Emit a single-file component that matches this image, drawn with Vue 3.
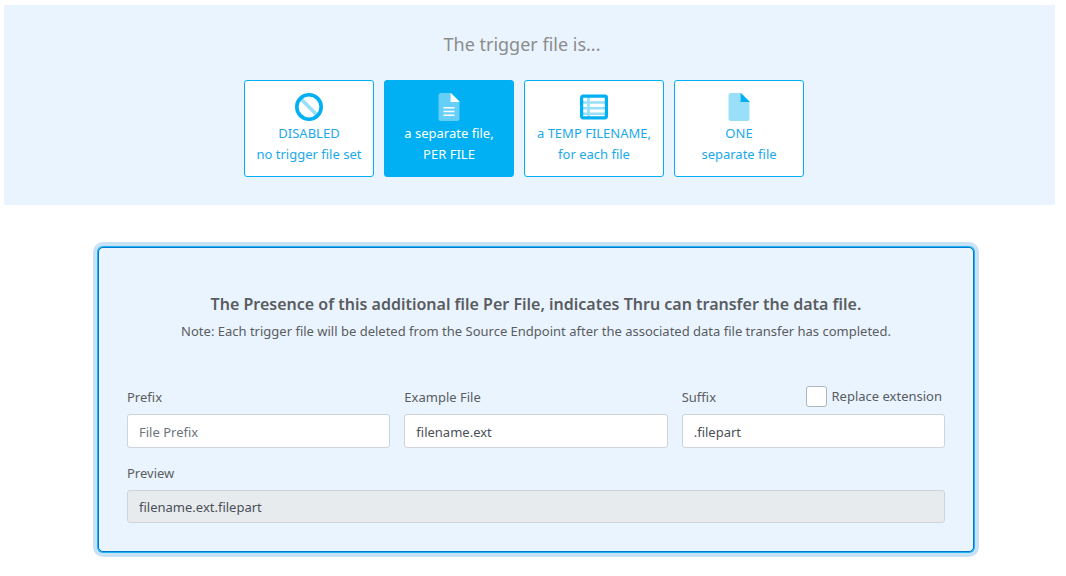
<script setup>
import { ref, computed } from 'vue'

const options = [
  { id: 'disabled', icon: 'ban', lines: ['DISABLED', 'no trigger file set'] },
  { id: 'per-file', icon: 'file-lines', lines: ['a separate file,', 'PER FILE'] },
  { id: 'temp', icon: 'table', lines: ['a TEMP FILENAME,', 'for each file'], wide: true },
  { id: 'one', icon: 'file', lines: ['ONE', 'separate file'] },
]

const selected = ref('per-file')
const prefix = ref('')
const example = ref('filename.ext')
const suffix = ref('.filepart')
const replaceExtension = ref(false)

const preview = computed(() => {
  const base = replaceExtension.value ? example.value.replace(/\.[^.]*$/, '') : example.value
  return prefix.value + base + suffix.value
})
</script>

<template>
  <main class="page">
    <section class="chooser">
      <h1 class="chooser-title">The trigger file is...</h1>
      <div class="options">
        <button
          v-for="o in options"
          :key="o.id"
          type="button"
          class="option"
          :class="{ active: selected === o.id, wide: o.wide }"
          :aria-pressed="selected === o.id"
          @click="selected = o.id"
        >
          <svg class="icon" viewBox="0 0 28 28" aria-hidden="true">
            <template v-if="o.icon === 'ban'">
              <path d="M6 6L22 22" stroke="currentColor" stroke-width="3.6" opacity="0.4" />
              <circle cx="14" cy="14" r="12.2" fill="none" stroke="currentColor" stroke-width="3.6" />
            </template>
            <template v-else-if="o.icon === 'table'">
              <path d="M3 9.5H25M3 15.2H25M3 20.8H25M8.5 4V24" stroke="currentColor" stroke-width="2.6" opacity="0.4" />
              <rect x="1.6" y="3.2" width="24.8" height="21.6" rx="1.5" fill="none" stroke="currentColor" stroke-width="3.2" />
            </template>
            <template v-else>
              <path
                d="M6 0H15.5V7A2 2 0 0 0 17.5 9H24.5V25.5A2.5 2.5 0 0 1 22 28H6A2.5 2.5 0 0 1 3.5 25.5V2.5A2.5 2.5 0 0 1 6 0Z"
                fill="currentColor"
                opacity="0.4"
              />
              <path d="M15.5 0H16L24.5 8.5V9H15.5Z" fill="currentColor" />
              <path
                v-if="o.icon === 'file-lines'"
                d="M8.5 14.7H19.5M8.5 18.5H19.5M8.5 22.3H19.5"
                stroke="currentColor"
                stroke-width="1.6"
              />
            </template>
          </svg>
          <span v-for="line in o.lines" :key="line" class="option-line">{{ line }}</span>
        </button>
      </div>
    </section>

    <section class="panel">
      <h2 class="panel-title">The Presence of this additional file Per File, indicates Thru can transfer the data file.</h2>
      <p class="note">Note: Each trigger file will be deleted from the Source Endpoint after the associated data file transfer has completed.</p>

      <form class="fields" @submit.prevent>
        <div class="field">
          <div class="field-head"><label for="prefix">Prefix</label></div>
          <input id="prefix" v-model="prefix" class="text" type="text" placeholder="File Prefix" />
        </div>
        <div class="field">
          <div class="field-head"><label for="example">Example File</label></div>
          <input id="example" v-model="example" class="text" type="text" />
        </div>
        <div class="field">
          <div class="field-head">
            <label for="suffix">Suffix</label>
            <div class="check">
              <input id="replace" v-model="replaceExtension" class="box" type="checkbox" />
              <label for="replace">Replace extension</label>
            </div>
          </div>
          <input id="suffix" v-model="suffix" class="text" type="text" />
        </div>
        <div class="field full">
          <div class="field-head"><label for="preview">Preview</label></div>
          <input id="preview" class="text" type="text" :value="preview" readonly />
        </div>
      </form>
    </section>
  </main>
</template>

<style>
body {
  margin: 0;
  background: #fff;
}
</style>

<style scoped>
.page {
  box-sizing: border-box;
  padding: 5px 11px 18px 4px;
  font-family: "Noto Sans", "Open Sans", sans-serif;
  font-size: 13px;
  line-height: 21px;
  color: #5a5c5f;
}
.chooser {
  padding: 24px 0 28px;
  background: #e9f4ff;
}
.chooser-title {
  margin: 0 15px 21px 0;
  font-size: 18px;
  line-height: 30px;
  font-weight: 400;
  text-align: center;
  color: #8c8c8c;
}
.options {
  display: flex;
  justify-content: center;
  gap: 10px;
  padding-right: 11px;
}
.option {
  box-sizing: border-box;
  display: flex;
  flex-direction: column;
  align-items: center;
  width: 130px;
  padding: 12px 0 11px;
  border: 1px solid #00b0f3;
  border-radius: 3px;
  background: #fff;
  color: #1aa9ec;
  font: inherit;
  white-space: nowrap;
  cursor: pointer;
}
.option.wide {
  width: 140px;
}
.option.active {
  background: #00b0f3;
  color: #fff;
}
.icon {
  display: block;
  width: 28px;
  height: 28px;
  margin-bottom: 2px;
  color: #00b0f3;
}
.active .icon {
  color: #fff;
}
.option-line {
  display: block;
}
.panel {
  margin: 42px 81px 0 94px;
  padding: 42px 28px 28px;
  border: 1px solid #0078d0;
  border-radius: 5px;
  background: #e9f4ff;
  box-shadow: 0 0 0 1px #1cb4f2, 0 0 0 5px #c8e1f5;
}
.panel-title {
  margin: 0;
  font-size: 16px;
  line-height: 28px;
  font-weight: 600;
  text-align: center;
}
.note {
  margin: 3px 0 44px;
  text-align: center;
}
.fields {
  display: grid;
  grid-template-columns: repeat(3, minmax(0, 1fr));
  gap: 14px;
}
.full {
  grid-column: 1 / -1;
}
.field-head {
  display: flex;
  align-items: flex-end;
  justify-content: space-between;
  height: 22px;
  margin-bottom: 6px;
}
.check {
  display: flex;
  align-self: flex-start;
  align-items: center;
  gap: 4px;
  margin-right: 3px;
}
.box {
  appearance: none;
  box-sizing: border-box;
  width: 21px;
  height: 21px;
  margin: 0;
  border: 1px solid #adb5bd;
  border-radius: 3px;
  background: #fff;
}
.box:checked {
  background: #00b0f3;
}
.text {
  box-sizing: border-box;
  display: block;
  width: 100%;
  height: 34px;
  padding: 1px 11px 0;
  border: 1px solid #ced4da;
  border-radius: 3px;
  background: #fff;
  color: #495057;
  font: inherit;
}
.text::placeholder {
  color: #6c757d;
  opacity: 1;
}
.text:read-only {
  height: 33px;
  padding-top: 0;
  background: #e7ebee;
}
</style>
